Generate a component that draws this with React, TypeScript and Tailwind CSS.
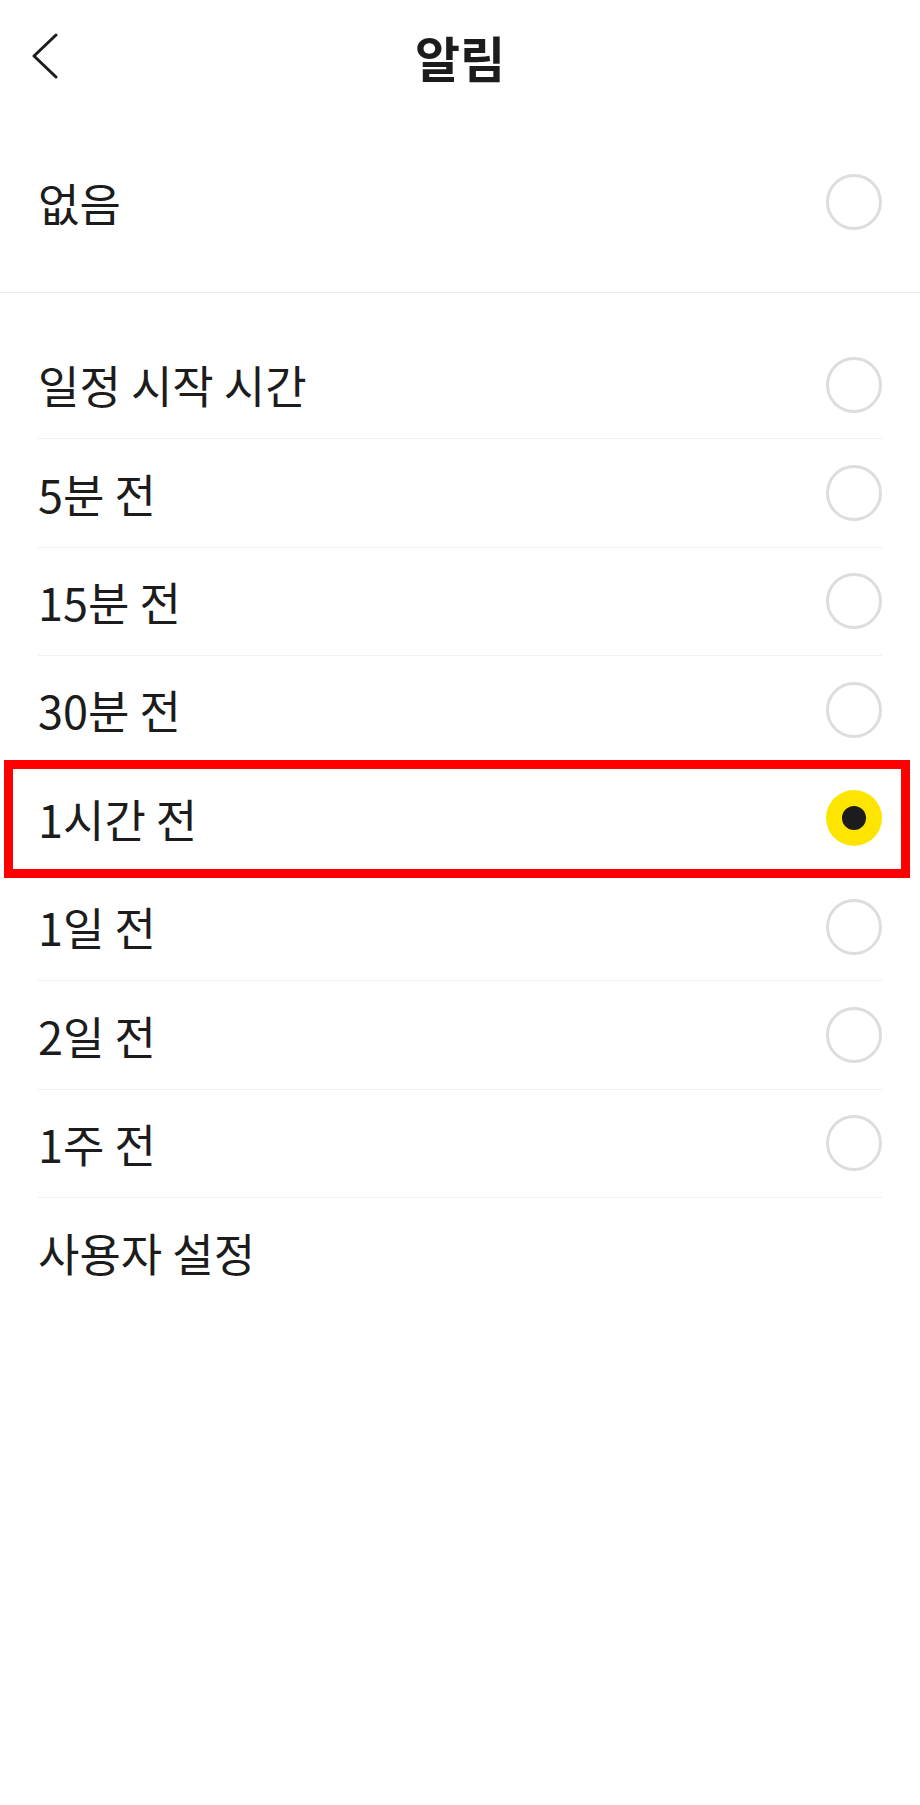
const font = { fontFamily: '"Noto Sans CJK KR", "Noto Sans", sans-serif' };

type Option = { label: string; selected?: boolean; radio?: boolean };

const options: Option[] = [
  { label: "일정 시작 시간" },
  { label: "5분 전" },
  { label: "15분 전" },
  { label: "30분 전" },
  { label: "1시간 전", selected: true },
  { label: "1일 전" },
  { label: "2일 전" },
  { label: "1주 전" },
  { label: "사용자 설정", radio: false },
];

const Radio = ({ selected }: { selected?: boolean }) =>
  selected ? (
    <span className="flex size-[56px] items-center justify-center rounded-full bg-[#fee500]">
      <span className="size-[24px] rounded-full bg-[#1c1c1c]" />
    </span>
  ) : (
    <span className="size-[56px] rounded-full border-[3px] border-[#dddddd]" />
  );

const Row = ({ option, last }: { option: Option; last: boolean }) => (
  <div
    className={
      "relative flex h-[108.4px] items-center justify-between " +
      (last ? "" : "border-b border-[#f1f1f1]")
    }
  >
    <span className="text-[45px] font-normal leading-none text-[#1c1c1c]">{option.label}</span>
    {option.radio !== false && <Radio selected={option.selected} />}
    {option.selected && (
      <span className="pointer-events-none absolute -top-[5px] -bottom-[6px] -left-[34px] -right-[28px] border-[9px] border-[#ff0000]" />
    )}
  </div>
);

export default function App() {
  return (
    <div className="min-h-[1805px] w-[920px] bg-white" style={font}>
      <header className="grid h-[112px] grid-cols-[1fr_auto_1fr] items-center px-[30px]">
        <button className="flex h-[48px] w-[40px] items-center">
          <svg width="30" height="46" viewBox="0 0 30 46" fill="none">
            <path d="M26 2 L4 23 L26 44" stroke="#1c1c1c" strokeWidth="3" strokeLinecap="round" strokeLinejoin="round" />
          </svg>
        </button>
        <h1 className="text-[49px] font-bold leading-none text-[#1c1c1c]">알림</h1>
        <div />
      </header>

      <div className="flex h-[180px] items-center justify-between px-[38px]">
        <span className="text-[45px] font-normal leading-none text-[#1c1c1c]">없음</span>
        <Radio />
      </div>
      <div className="h-px bg-[#ececec]" />

      <div className="px-[38px] pt-[38px]">
        {options.map((o, i) => (
          <Row key={o.label} option={o} last={i === options.length - 1} />
        ))}
      </div>
    </div>
  );
}
